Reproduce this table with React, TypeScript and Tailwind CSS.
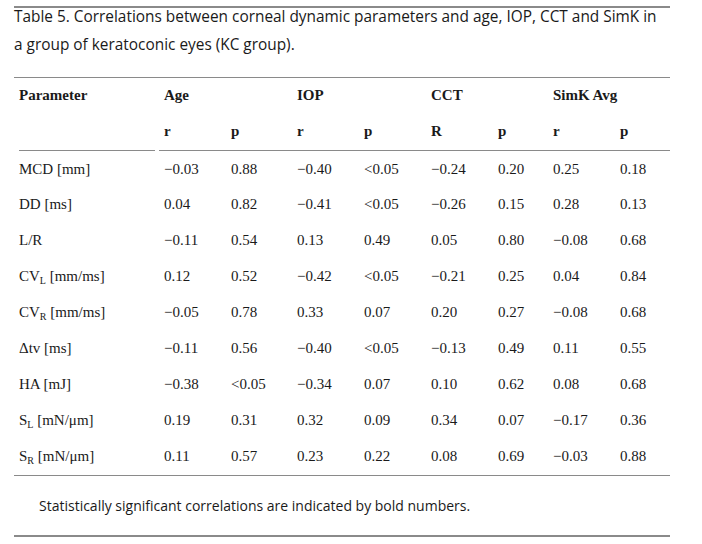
import React from "react";

const Sub = ({ children }: { children: React.ReactNode }) => (
  <span className="text-[10px] relative top-[3px]">{children}</span>
);

const rows: { label: React.ReactNode; v: string[] }[] = [
  { label: "MCD [mm]", v: ["−0.03", "0.88", "−0.40", "<0.05", "−0.24", "0.20", "0.25", "0.18"] },
  { label: "DD [ms]", v: ["0.04", "0.82", "−0.41", "<0.05", "−0.26", "0.15", "0.28", "0.13"] },
  { label: "L/R", v: ["−0.11", "0.54", "0.13", "0.49", "0.05", "0.80", "−0.08", "0.68"] },
  {
    label: (
      <>
        CV<Sub>L</Sub> [mm/ms]
      </>
    ),
    v: ["0.12", "0.52", "−0.42", "<0.05", "−0.21", "0.25", "0.04", "0.84"],
  },
  {
    label: (
      <>
        CV<Sub>R</Sub> [mm/ms]
      </>
    ),
    v: ["−0.05", "0.78", "0.33", "0.07", "0.20", "0.27", "−0.08", "0.68"],
  },
  { label: "Δtv [ms]", v: ["−0.11", "0.56", "−0.40", "<0.05", "−0.13", "0.49", "0.11", "0.55"] },
  { label: "HA [mJ]", v: ["−0.38", "<0.05", "−0.34", "0.07", "0.10", "0.62", "0.08", "0.68"] },
  {
    label: (
      <>
        S<Sub>L</Sub> [mN/μm]
      </>
    ),
    v: ["0.19", "0.31", "0.32", "0.09", "0.34", "0.07", "−0.17", "0.36"],
  },
  {
    label: (
      <>
        S<Sub>R</Sub> [mN/μm]
      </>
    ),
    v: ["0.11", "0.57", "0.23", "0.22", "0.08", "0.69", "−0.03", "0.88"],
  },
];

const cols = "grid grid-cols-[145px_67px_66px_67px_67px_67px_55px_67px_1fr]";

export default function App() {
  return (
    <div className="w-[702px] h-[544px] bg-white pl-[14px] pt-[6px] text-[#1a1a1a]">
      <div className="w-[656px]">
        <div className="border-t-2 border-[#8a8a8a]" />
        <div className="font-['Open_Sans',sans-serif] text-[15.4px] leading-[28px] text-[#1a1a1a] h-[69px] -mt-[5px]">
          <div className="w-[650px]">
            Table 5. Correlations between corneal dynamic parameters and age, IOP, CCT and SimK in a group of keratoconic eyes (KC group).
          </div>
        </div>
        <div className="border-t border-[#8a8a8a] mt-[5px]" />
        <div className="font-['Liberation_Serif',serif] text-[15px]">
          <div className={`${cols} pl-[5px] h-[35px] items-center font-bold`}>
            <div>Parameter</div>
            <div>Age</div>
            <div />
            <div>IOP</div>
            <div />
            <div>CCT</div>
            <div />
            <div>SimK Avg</div>
            <div />
          </div>
          <div className={`${cols} pl-[5px] h-[37px] items-center font-bold`}>
            <div />
            <div>r</div>
            <div>p</div>
            <div>r</div>
            <div>p</div>
            <div>R</div>
            <div>p</div>
            <div>r</div>
            <div>p</div>
          </div>
          <div className="flex h-px">
            <div className="ml-[5px] w-[136px] bg-[#8a8a8a]" />
            <div className="ml-[4px] flex-1 bg-[#8a8a8a]" />
          </div>
          {rows.map((r, i) => (
            <div key={i} className={`${cols} pl-[5px] ${i === 0 ? "h-[36px] pt-[5px]" : "h-[36px] pt-[3px]"} items-center`}>
              <div>{r.label}</div>
              {r.v.map((x, j) => (
                <div key={j}>{x}</div>
              ))}
              <div />
            </div>
          ))}
        </div>
        <div className="border-t border-[#8a8a8a]" />
        <div className="font-['Open_Sans',sans-serif] text-[14px] h-[59px] flex items-center pl-[25px] text-[#1a1a1a]">
          Statistically significant correlations are indicated by bold numbers.
        </div>
        <div className="border-t-2 border-[#8a8a8a]" />
      </div>
    </div>
  );
}
